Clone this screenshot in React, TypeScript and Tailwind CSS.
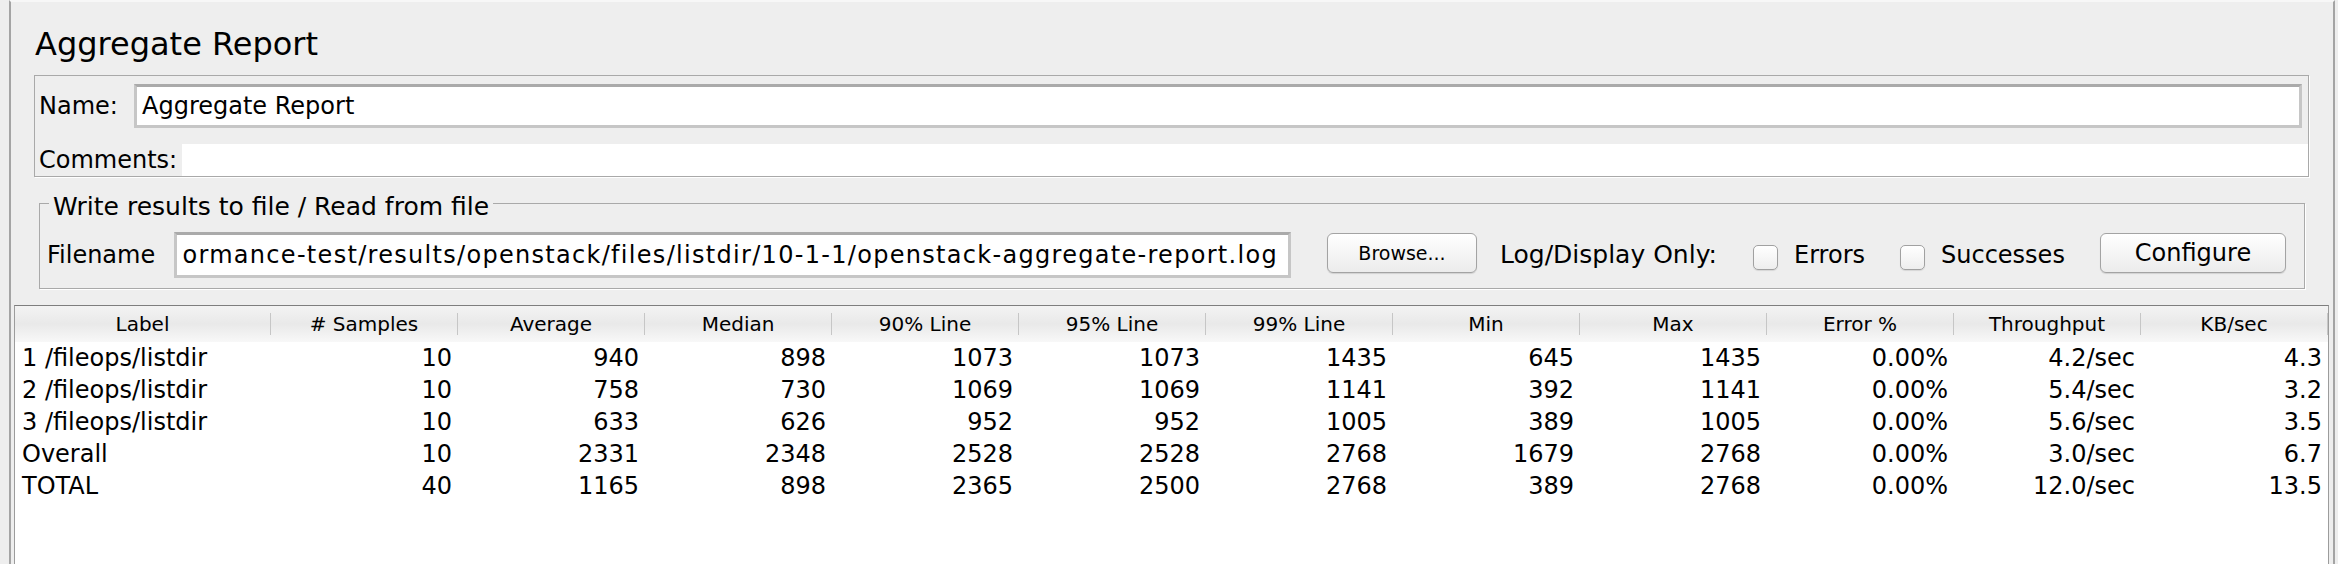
import React from "react";

const COLUMNS = [
  "Label",
  "# Samples",
  "Average",
  "Median",
  "90% Line",
  "95% Line",
  "99% Line",
  "Min",
  "Max",
  "Error %",
  "Throughput",
  "KB/sec",
];

const ROWS: string[][] = [
  ["1 /fileops/listdir", "10", "940", "898", "1073", "1073", "1435", "645", "1435", "0.00%", "4.2/sec", "4.3"],
  ["2 /fileops/listdir", "10", "758", "730", "1069", "1069", "1141", "392", "1141", "0.00%", "5.4/sec", "3.2"],
  ["3 /fileops/listdir", "10", "633", "626", "952", "952", "1005", "389", "1005", "0.00%", "5.6/sec", "3.5"],
  ["Overall", "10", "2331", "2348", "2528", "2528", "2768", "1679", "2768", "0.00%", "3.0/sec", "6.7"],
  ["TOTAL", "40", "1165", "898", "2365", "2500", "2768", "389", "2768", "0.00%", "12.0/sec", "13.5"],
];

// field is scrolled to the end, so only the tail of the path shows
const FILE_PATH = "ormance-test/results/openstack/files/listdir/10-1-1/openstack-aggregate-report.log";

const fieldCls =
  "bg-white border-[3px] border-[#c6c6c6] border-t-[#aaaaaa] flex items-center overflow-hidden whitespace-nowrap";
const buttonCls =
  "rounded-[6px] border border-[#a3a3a3] bg-linear-to-b from-white to-[#ececec] shadow-[0_1px_1px_rgba(0,0,0,0.12)] flex items-center justify-center";

function Checkbox() {
  return (
    <div className="w-[25px] h-[25px] mt-[5px] rounded-[5px] border border-[#a1a1a1] bg-linear-to-b from-white to-[#eeeeee] shadow-[0_1px_1px_rgba(0,0,0,0.1)]" />
  );
}

export default function App() {
  return (
    <div className="w-[2338px] h-[564px] overflow-hidden bg-[#eeeeee] text-black font-['DejaVu_Sans',sans-serif]">
      <div className="ml-[9px] w-[2326px] h-full flex flex-col border-x-2 border-t-2 border-[#a4a4a4] border-t-[#f7f7f7]">
        {/* title */}
        <div className="pl-[24px] pt-[22px] text-[32px] leading-[40px]">Aggregate Report</div>

        {/* name / comments */}
        <div className="mt-[11px] ml-[23px] w-[2275px] border border-[#a9a9a9] shadow-[1px_1px_0_#ffffff]">
          <div className="flex items-center pt-[8px] pr-[6px]">
            <div className="w-[99px] pl-[4px] text-[24px]">Name:</div>
            <div className={`${fieldCls} flex-1 h-[44px] pl-[5px] text-[24px]`}>Aggregate Report</div>
          </div>
          <div className="flex items-center mt-[16px] h-[32px]">
            <div className="w-[147px] pl-[4px] text-[24px]">Comments:</div>
            <div className="flex-1 h-full bg-white" />
          </div>
        </div>

        {/* file group */}
        <fieldset className="mt-[10px] ml-[28px] w-[2266px] border border-[#a9a9a9] shadow-[1px_1px_0_#ffffff]">
          <legend className="ml-[9px] px-[4px] pt-[8px] text-[25px] leading-[24px]">
            Write results to file / Read from file
          </legend>
          <div className="flex items-center h-[46px] mt-[13px] mb-[10px] text-[24px]">
            <div className="w-[134px] pl-[7px]">Filename</div>
            <div className={`${fieldCls} w-[1117px] h-[46px] justify-end pr-[10px] tracking-[1.3px]`}>{FILE_PATH}</div>
            <div className={`${buttonCls} self-start mt-[1px] ml-[36px] w-[150px] h-[40px] text-[19px]`}>Browse...</div>
            <div className="ml-[23px] w-[253px] text-[25px]">Log/Display Only:</div>
            <Checkbox />
            <div className="ml-[16px] w-[106px]">Errors</div>
            <Checkbox />
            <div className="ml-[16px] w-[159px]">Successes</div>
            <div className={`${buttonCls} self-start mt-[1px] w-[186px] h-[40px] text-[24px]`}>Configure</div>
          </div>
        </fieldset>

        {/* results table */}
        <div className="mt-[16px] ml-[3px] w-[2315px] flex-1 bg-white border-x border-t border-[#9c9c9c] border-t-[#7e7e7e]">
          <div className="grid grid-cols-[256px_repeat(11,187px)] h-[36px] bg-linear-to-b from-[#f3f3f3] via-[#e9e9e9] to-[#f8f8f8] text-[20px]">
            {COLUMNS.map((c) => (
              <div key={c} className="flex items-center">
                <span className="flex-1 text-center whitespace-nowrap">{c}</span>
                <div className="w-px h-[22px] bg-[#c6c6c6]" />
              </div>
            ))}
          </div>
          {ROWS.map((r) => (
            <div key={r[0]} className="grid grid-cols-[256px_repeat(11,187px)] h-[32px] leading-[32px] text-[24px]">
              {r.map((v, i) => (
                <div
                  key={i}
                  className={i === 0 ? "pl-[7px] whitespace-nowrap" : "text-right pr-[6px] whitespace-nowrap"}
                >
                  {v}
                </div>
              ))}
            </div>
          ))}
        </div>
      </div>
    </div>
  );
}
